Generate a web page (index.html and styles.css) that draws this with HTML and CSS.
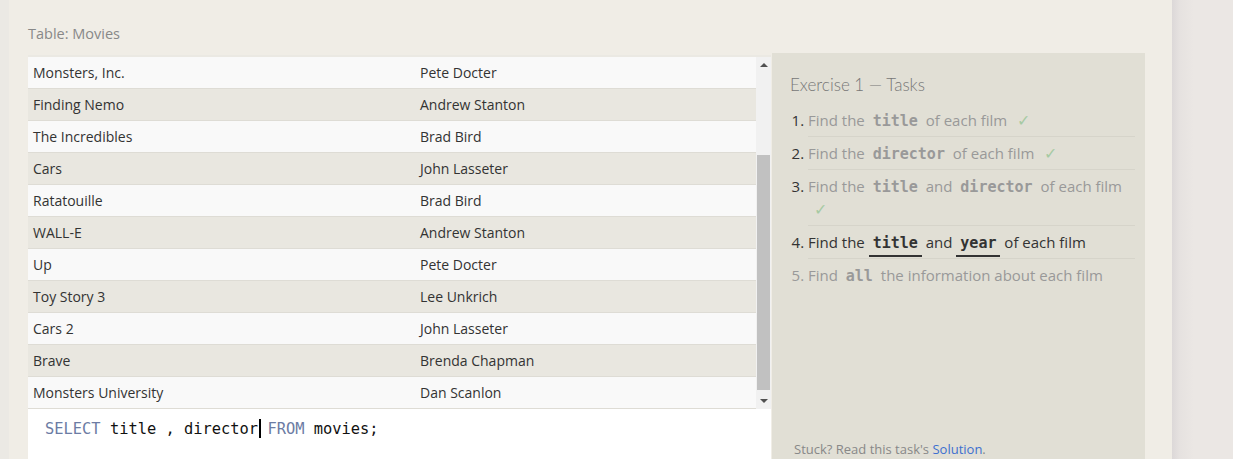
FILE: index.html
```html
<!DOCTYPE html>
<html>
<head>
<meta charset="utf-8">
<title>SQL Lesson</title>
<link rel="stylesheet" href="styles.css">
</head>
<body>
<div class="shell">
  <main class="page">
    <div class="table-label">Table: Movies</div>
    <div class="workspace">
      <section class="left">
        <div class="table-wrap">
          <div class="rows">
            <div class="row"><span class="c1">Monsters, Inc.</span><span class="c2">Pete Docter</span></div>
            <div class="row"><span class="c1">Finding Nemo</span><span class="c2">Andrew Stanton</span></div>
            <div class="row"><span class="c1">The Incredibles</span><span class="c2">Brad Bird</span></div>
            <div class="row"><span class="c1">Cars</span><span class="c2">John Lasseter</span></div>
            <div class="row"><span class="c1">Ratatouille</span><span class="c2">Brad Bird</span></div>
            <div class="row"><span class="c1">WALL-E</span><span class="c2">Andrew Stanton</span></div>
            <div class="row"><span class="c1">Up</span><span class="c2">Pete Docter</span></div>
            <div class="row"><span class="c1">Toy Story 3</span><span class="c2">Lee Unkrich</span></div>
            <div class="row"><span class="c1">Cars 2</span><span class="c2">John Lasseter</span></div>
            <div class="row"><span class="c1">Brave</span><span class="c2">Brenda Chapman</span></div>
            <div class="row"><span class="c1">Monsters University</span><span class="c2">Dan Scanlon</span></div>
          </div>
          <div class="scrollbar">
            <span class="arrow up"></span>
            <div class="track"><div class="thumb"></div></div>
            <span class="arrow down"></span>
          </div>
        </div>
        <div class="editor"><span class="kw">SELECT</span> title , director<span class="caret"></span> <span class="kw">FROM</span> movies;</div>
      </section>
      <aside class="tasks">
        <h2 class="tasks-title">Exercise 1 — Tasks</h2>
        <ol class="task-list">
          <li class="done">Find the <code>title</code> of each film <span class="check">✓</span></li>
          <li class="done">Find the <code>director</code> of each film <span class="check">✓</span></li>
          <li class="done">Find the <code>title</code> and <code>director</code> of each film <span class="check">✓</span></li>
          <li class="current">Find the <code>title</code> and <code>year</code> of each film</li>
          <li class="todo">Find <code>all</code> the information about each film</li>
        </ol>
        <p class="stuck">Stuck? Read this task's <a href="#">Solution</a>.</p>
      </aside>
    </div>
  </main>
  <div class="side"></div>
</div>
</body>
</html>
```
FILE: styles.css
```css
* { box-sizing: border-box; }
html, body { margin: 0; padding: 0; height: 100%; overflow: hidden; }
body {
  background: #ebe7e4;
  font-family: "Open Sans", "Noto Sans", sans-serif;
  color: #333;
}
.shell { display: flex; height: 100%; }
.page {
  width: 1172px;
  flex: none;
  background: #f0ede6;
  border-left: 9px solid #ebe9e4;
  padding: 24px 27px 0 19px;
}
.side {
  flex: 1;
  background: linear-gradient(to right, #dcd8d8 0, #e6e2e0 8px, #ebe7e4 22px);
}
.table-label {
  font-size: 14.5px;
  color: #888;
  line-height: 20px;
  margin-bottom: 11px;
}
.workspace { display: flex; align-items: stretch; }
.left { width: 743px; flex: none; display: flex; flex-direction: column; }
.table-wrap {
  display: flex;
  border-top: 2px solid #ebe9e3;
  background: #fff;
}
.rows { width: 728px; flex: none; }
.row {
  display: flex;
  height: 32px;
  align-items: center;
  font-size: 14px;
  color: #333;
  border-bottom: 1px solid #dedcd5;
  background: #f9f9f9;
}
.row:nth-child(even) { background: #e9e7e0; }
.c1 { width: 392px; padding-left: 5px; }
.c2 { flex: 1; }
.scrollbar {
  width: 15px;
  flex: none;
  background: #f1f1f1;
  display: flex;
  flex-direction: column;
  align-items: center;
}
.arrow {
  width: 0; height: 0;
  border-left: 4px solid transparent;
  border-right: 4px solid transparent;
  margin: 6px 0 4px;
}
.arrow.up { border-bottom: 4px solid #505050; }
.arrow.down { border-top: 4px solid #505050; margin: 4px 0 6px; }
.track { flex: 1; width: 100%; padding: 84px 1px 5px 1px; display: flex; }
.thumb { flex: 1; background: #c1c1c1; }
.editor {
  background: #fff;
  height: 60px;
  padding: 9px 0 0 17px;
  font-family: "DejaVu Sans Mono", monospace;
  font-size: 15.4px;
  line-height: 22px;
  color: #111;
  white-space: pre;
}
.kw { color: #6c7ca4; }
.caret {
  display: inline-block;
  width: 2px;
  height: 19px;
  background: #000;
  vertical-align: -4px;
  margin-left: 1px;
  margin-right: -3px;
}
.tasks {
  width: 373px;
  flex: none;
  margin-left: 1px;
  background: #e1dfd5;
  display: flex;
  flex-direction: column;
  padding: 20px 10px 2px 18px;
  margin-top: -2px;
}
.tasks-title {
  font-family: "Lato", "Open Sans", sans-serif;
  font-size: 17px;
  font-weight: 300;
  color: #777;
  margin: 0 0 7px;
  line-height: 24px;
}
.task-list {
  margin: 0;
  padding-left: 18px;
  font-size: 15px;
}
.task-list li {
  line-height: 23px;
  padding: 5px 0 4px;
  border-bottom: 1px solid #d6d4ca;
  color: #999;
}
.task-list li::marker { color: #333; }
.task-list li.todo { border-bottom: none; color: #999; }
.task-list li.todo::marker { color: #999; }
.task-list li.current { color: #333; }
.task-list code {
  font-family: "DejaVu Sans Mono", monospace;
  font-weight: bold;
  font-size: 15px;
  line-height: 1;
  padding: 0 4px;
  color: #999;
}
.task-list li.current code {
  color: #333;
  border-bottom: 2px solid #333;
  padding-bottom: 3px;
}
.check { color: #a7caa3; margin-left: 6px; font-size: 16px; line-height: 1; }
.stuck {
  margin: auto 0 0;
  font-size: 13px;
  color: #888;
  line-height: 20px;
  padding-bottom: 8px;
  padding-left: 4px;
}
.stuck a { color: #3d6fcf; text-decoration: none; }
```
